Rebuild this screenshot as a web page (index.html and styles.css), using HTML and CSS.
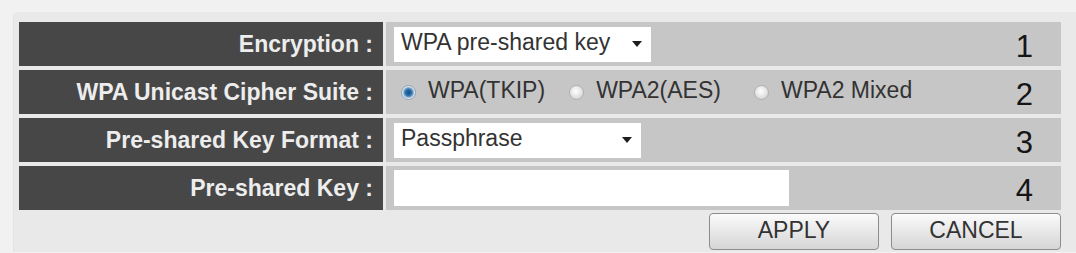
FILE: index.html
```html
<!DOCTYPE html>
<html>
<head>
<meta charset="utf-8">
<link rel="stylesheet" href="styles.css">
</head>
<body>
<div class="panel">
  <div class="form">
    <div class="label">Encryption :</div>
    <div class="value">
      <div class="select sel-wide"><span>WPA pre-shared key</span><i class="arrow"></i></div>
      <div class="num">1</div>
    </div>

    <div class="label">WPA Unicast Cipher Suite :</div>
    <div class="value">
      <label class="opt"><input type="radio" name="c" checked><span>WPA(TKIP)</span></label>
      <label class="opt opt2"><input type="radio" name="c"><span>WPA2(AES)</span></label>
      <label class="opt opt3"><input type="radio" name="c"><span>WPA2 Mixed</span></label>
      <div class="num">2</div>
    </div>

    <div class="label">Pre-shared Key Format :</div>
    <div class="value">
      <div class="select sel-narrow"><span>Passphrase</span><i class="arrow"></i></div>
      <div class="num">3</div>
    </div>

    <div class="label">Pre-shared Key :</div>
    <div class="value">
      <div class="textbox"></div>
      <div class="num">4</div>
    </div>
  </div>
  <div class="buttons">
    <button class="btn">APPLY</button>
    <button class="btn">CANCEL</button>
  </div>
</div>
</body>
</html>
```

FILE: styles.css
```css
html, body {
  margin: 0;
  padding: 0;
}
body {
  background: #f1f1f1;
  width: 1076px;
  height: 253px;
  overflow: hidden;
  font-family: "Liberation Sans", Arial, sans-serif;
}
.panel {
  margin: 12px 0 0 13px;
  padding: 10px 0 10px 5px;
  background: #e9e9e9;
  border-top-left-radius: 6px;
  border-left: 1px solid #e3e3e3;
  height: 240px;
  box-sizing: border-box;
}
.form {
  display: grid;
  grid-template-columns: 364px 675px;
  grid-auto-rows: 44px;
  column-gap: 3px;
  row-gap: 4px;
}
.label {
  background: #474747;
  color: #ededed;
  font-weight: bold;
  font-size: 23px;
  line-height: 44px;
  text-align: right;
  padding-right: 10px;
  white-space: nowrap;
}
.value {
  background: #c6c6c6;
  display: flex;
  align-items: center;
  padding-left: 8px;
  color: #333;
  font-size: 23px;
}
.select {
  height: 35px;
  background: #fff;
  display: flex;
  align-items: center;
  justify-content: space-between;
  padding: 0 9px 3px 7px;
  box-sizing: border-box;
  color: #333;
}
.sel-wide { width: 257px; }
.sel-narrow { width: 247px; }
.arrow {
  display: block;
  width: 0;
  height: 0;
  margin-top: 3px;
  border-left: 5px solid transparent;
  border-right: 5px solid transparent;
  border-top: 6px solid #1e1e1e;
}
.textbox {
  width: 395px;
  height: 36px;
  background: #fff;
}
.opt {
  display: flex;
  align-items: center;
  gap: 12px;
  padding-bottom: 3px;
  margin-left: 7px;
}
.opt2 { margin-left: 24px; }
.opt3 { margin-left: 33px; }
.opt input {
  appearance: none;
  -webkit-appearance: none;
  width: 15px;
  height: 15px;
  margin: 3px 0 0 0;
  border-radius: 50%;
  border: 1px solid #b0b0b0;
  background: radial-gradient(circle at 45% 40%, #ffffff 0, #e8e8e8 45%, #c8c8c8 100%);
  box-sizing: border-box;
  flex: none;
}
.opt input:checked {
  border-color: #8fa3b5;
  background: radial-gradient(circle at 50% 50%, #0f4f87 0, #2a6ea8 3px, #6e9fc8 4.5px, #dfe7ee 6px);
}
.num {
  margin-left: auto;
  align-self: center;
  margin-top: 5px;
  font-size: 31px;
  line-height: 31px;
  padding-right: 28px;
  color: #151515;
}
.buttons {
  display: flex;
  justify-content: flex-end;
  gap: 12px;
  width: 1042px;
  margin-top: 3px;
}
.btn {
  width: 170px;
  height: 37px;
  border: 1px solid #8c8c8c;
  border-radius: 4px;
  background: linear-gradient(#fbfbfb, #e4e4e4 60%, #d6d6d6);
  font-family: "Liberation Sans", Arial, sans-serif;
  font-size: 23px;
  color: #333;
  padding: 0 0 2px 0;
}
```
